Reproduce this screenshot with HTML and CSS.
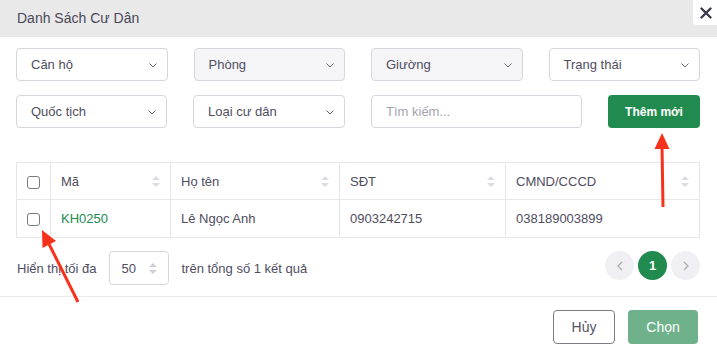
FILE: index.html
```html
<!DOCTYPE html>
<html lang="vi">
<head>
    <meta charset="UTF-8">
    <meta name="viewport" content="width=device-width, initial-scale=1.0">
    <title>Danh Sách Cư Dân</title>
    <link rel="stylesheet" href="styles.css">
</head>
<body>
    <div class="modal">
        <div class="modal-header">
            <span class="modal-title">Danh Sách Cư Dân</span>
            <div class="close-btn">
                <svg width="12" height="12" viewBox="0 0 12 12"><path d="M1.5 1.5 L10.5 10.5 M10.5 1.5 L1.5 10.5" stroke="#3d3b4b" stroke-width="2.4" stroke-linecap="round"/></svg>
            </div>
        </div>

        <div class="filters">
            <div class="row row-4">
                <div class="select">Căn hộ<svg class="chev" width="8" height="5" viewBox="0 0 8 5"><path d="M0.5 0.5 L4 4 L7.5 0.5" fill="none" stroke="#666" stroke-width="1"/></svg></div>
                <div class="select disabled">Phòng<svg class="chev" width="8" height="5" viewBox="0 0 8 5"><path d="M0.5 0.5 L4 4 L7.5 0.5" fill="none" stroke="#666" stroke-width="1"/></svg></div>
                <div class="select disabled">Giường<svg class="chev" width="8" height="5" viewBox="0 0 8 5"><path d="M0.5 0.5 L4 4 L7.5 0.5" fill="none" stroke="#666" stroke-width="1"/></svg></div>
                <div class="select">Trạng thái<svg class="chev" width="8" height="5" viewBox="0 0 8 5"><path d="M0.5 0.5 L4 4 L7.5 0.5" fill="none" stroke="#666" stroke-width="1"/></svg></div>
            </div>
            <div class="row row-2">
                <div class="select">Quốc tịch<svg class="chev" width="8" height="5" viewBox="0 0 8 5"><path d="M0.5 0.5 L4 4 L7.5 0.5" fill="none" stroke="#666" stroke-width="1"/></svg></div>
                <div class="select">Loại cư dân<svg class="chev" width="8" height="5" viewBox="0 0 8 5"><path d="M0.5 0.5 L4 4 L7.5 0.5" fill="none" stroke="#666" stroke-width="1"/></svg></div>
                <div class="search">Tìm kiếm...</div>
                <div class="btn-add">Thêm mới</div>
            </div>
        </div>

        <table class="grid">
            <colgroup>
                <col style="width: 34px">
                <col style="width: 120px">
                <col style="width: 169px">
                <col style="width: 166px">
                <col>
            </colgroup>
            <thead>
                <tr>
                    <th class="cb-cell"><span class="checkbox"></span></th>
                    <th><div class="th-in">Mã<span class="sort"></span></div></th>
                    <th><div class="th-in">Họ tên<span class="sort"></span></div></th>
                    <th><div class="th-in">SĐT<span class="sort"></span></div></th>
                    <th><div class="th-in">CMND/CCCD<span class="sort"></span></div></th>
                </tr>
            </thead>
            <tbody>
                <tr>
                    <td class="cb-cell"><span class="checkbox"></span></td>
                    <td class="code">KH0250</td>
                    <td>Lê Ngọc Anh</td>
                    <td>0903242715</td>
                    <td>038189003899</td>
                </tr>
            </tbody>
        </table>

        <div class="paging">
            <span>Hiển thị tối đa</span>
            <div class="num-input">50<span class="spin"></span></div>
            <span class="total">trên tổng số 1 kết quả</span>
            <div class="pager">
                <div class="page-btn"><svg width="6" height="10" viewBox="0 0 6 10"><path d="M5 1 L1 5 L5 9" fill="none" stroke="#aaa" stroke-width="1.2"/></svg></div>
                <div class="page-btn active">1</div>
                <div class="page-btn"><svg width="6" height="10" viewBox="0 0 6 10"><path d="M1 1 L5 5 L1 9" fill="none" stroke="#aaa" stroke-width="1.2"/></svg></div>
            </div>
        </div>

        <div class="modal-footer">
            <div class="btn-cancel">Hủy</div>
            <div class="btn-ok">Chọn</div>
        </div>
    </div>

    <svg class="marks" width="717" height="356" viewBox="0 0 717 356">
        <line x1="663" y1="207" x2="662" y2="146" stroke="#f7321c" stroke-width="3"/>
        <polygon points="662,133 654.5,149 669.5,149" fill="#f7321c"/>
        <line x1="78" y1="302" x2="49" y2="244" stroke="#f7321c" stroke-width="3"/>
        <polygon points="42,230 56,241 42.5,248" fill="#f7321c"/>
    </svg>
</body>
</html>
```

FILE: styles.css
```css
body {
    margin: 0;
    background: #fff;
    font-family: "Liberation Sans", Arial, sans-serif;
    font-size: 13px;
    color: #4f4d5e;
}
.modal {
    width: 717px;
    height: 356px;
}
.modal-header {
    height: 37px;
    background: #e9e9e9;
    display: flex;
    align-items: center;
    justify-content: space-between;
    padding-left: 17px;
}
.modal-title {
    font-size: 14px;
    color: #4a4858;
    margin-top: -1px;
}
.close-btn {
    align-self: flex-start;
    width: 22px;
    height: 25px;
    background: #fff;
    border-bottom-left-radius: 4px;
    display: flex;
    align-items: center;
    justify-content: center;
    padding-left: 2px;
}
.filters {
    padding: 11px 17px 0 16px;
    display: flex;
    flex-direction: column;
    gap: 14px;
}
.row {
    display: grid;
    column-gap: 26px;
}
.row-4 {
    grid-template-columns: repeat(4, 1fr);
}
.row-2 {
    grid-template-columns: 151px 152px 1fr 92px;
}
.select, .search {
    height: 33px;
    box-sizing: border-box;
    border: 1px solid #d6d6de;
    border-radius: 4px;
    background: #fff;
    display: flex;
    align-items: center;
    justify-content: space-between;
    padding: 0 10px 0 14px;
}
.select.disabled {
    background: #f5f5f7;
}
.chev {
    margin-top: 1px;
}
.search {
    color: #a5a4ae;
}
.btn-add {
    height: 33px;
    border-radius: 4px;
    background: #218a4e;
    color: #fff;
    display: flex;
    align-items: center;
    justify-content: center;
    font-weight: bold;
    font-size: 12px;
}
.grid {
    margin: 34px 0 0 16px;
    width: 684px;
    border-collapse: collapse;
    table-layout: fixed;
}
.grid th, .grid td {
    border: 1px solid #e6e6ee;
    text-align: left;
    font-weight: normal;
    padding: 0 10px;
}
.grid th {
    height: 36px;
}
.grid td {
    height: 37px;
}
.grid .cb-cell {
    padding: 0;
    text-align: center;
}
.th-in {
    display: flex;
    align-items: center;
    justify-content: space-between;
}
.sort {
    width: 8px;
    height: 11px;
    position: relative;
}
.sort::before, .sort::after {
    content: "";
    position: absolute;
    left: 0;
    border-left: 4px solid transparent;
    border-right: 4px solid transparent;
}
.sort::before {
    top: 0;
    border-bottom: 4px solid #dcdce4;
}
.sort::after {
    bottom: 0;
    border-top: 4px solid #dcdce4;
}
.checkbox {
    display: inline-block;
    width: 11px;
    height: 11px;
    border: 1px solid #7a7a80;
    border-radius: 3px;
    vertical-align: middle;
}
.code {
    color: #218a4e;
}
.paging {
    display: flex;
    align-items: center;
    padding: 13px 17px 0 17px;
    height: 34px;
}
.num-input {
    width: 60px;
    height: 34px;
    box-sizing: border-box;
    border: 1px solid #d6d6de;
    border-radius: 4px;
    margin-left: 12px;
    display: flex;
    align-items: center;
    justify-content: space-between;
    padding: 0 11px 0 12px;
}
.spin {
    width: 8px;
    height: 11px;
    position: relative;
}
.spin::before, .spin::after {
    content: "";
    position: absolute;
    left: 0;
    border-left: 4px solid transparent;
    border-right: 4px solid transparent;
}
.spin::before {
    top: 0;
    border-bottom: 4px solid #cfcfd6;
}
.spin::after {
    bottom: 0;
    border-top: 4px solid #cfcfd6;
}
.total {
    margin-left: 13px;
}
.pager {
    margin-left: auto;
    display: flex;
    gap: 4px;
    margin-top: -5px;
}
.page-btn {
    width: 29px;
    height: 29px;
    border-radius: 50%;
    background: #f0f0f4;
    display: flex;
    align-items: center;
    justify-content: center;
}
.page-btn.active {
    background: #218a4e;
    color: #fff;
    font-weight: bold;
}
.modal-footer {
    margin-top: 11px;
    border-top: 1px solid #ececf0;
    display: flex;
    justify-content: flex-end;
    gap: 13px;
    padding: 13px 19px 0 0;
}
.btn-cancel, .btn-ok {
    height: 34px;
    box-sizing: border-box;
    border-radius: 4px;
    display: flex;
    align-items: center;
    justify-content: center;
    font-size: 14px;
}
.btn-cancel {
    width: 62px;
    border: 1px solid #7d7d85;
    color: #55535f;
}
.btn-ok {
    width: 70px;
    background: #6fb18b;
    color: #fff;
}
.marks {
    position: absolute;
    left: 0;
    top: 0;
    pointer-events: none;
}
```
